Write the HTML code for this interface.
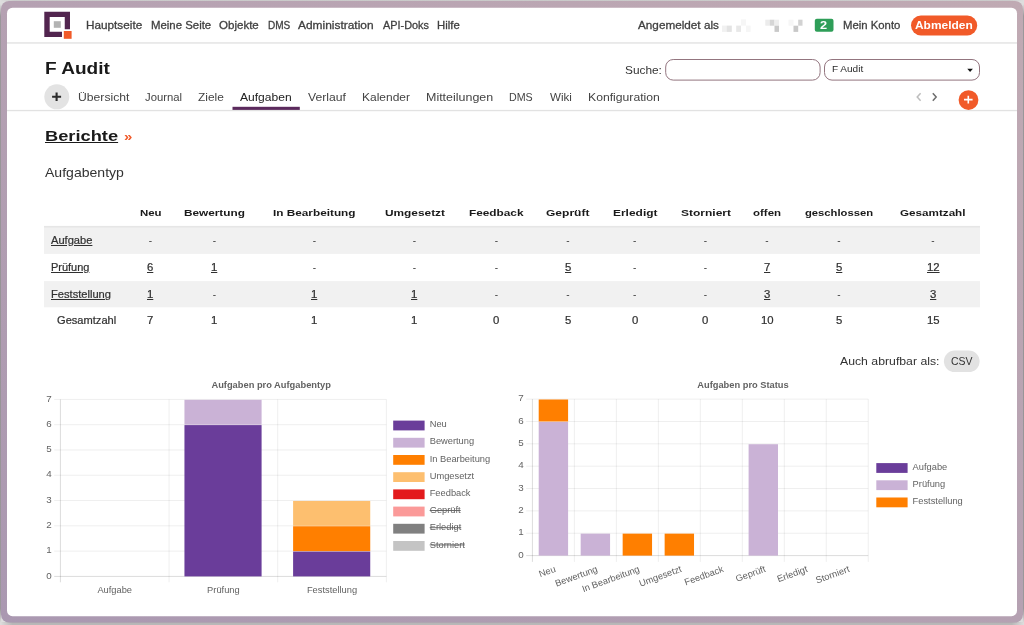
<!DOCTYPE html>
<html lang="de">
<head>
<meta charset="utf-8">
<title>F Audit - Berichte</title>
<style>
html,body{margin:0;padding:0;}
body{width:1024px;height:625px;overflow:hidden;background:#dedede;font-family:"Liberation Sans",sans-serif;position:relative;}
.abs{position:absolute;}
.t{position:absolute;white-space:nowrap;line-height:20px;transform-origin:0 0;font-family:"Liberation Sans",sans-serif;}
</style>
</head>
<body>
<svg class="abs" style="left:0;top:0;will-change:transform" width="1024" height="625" viewBox="0 0 1024 625" font-family="Liberation Sans, sans-serif">
<defs>
  <linearGradient id="gtop" x1="0" x2="1" y1="0" y2="0"><stop offset="0" stop-color="#dedede"/><stop offset="0.014" stop-color="#cbcbcb"/><stop offset="0.5" stop-color="#c9cac9"/><stop offset="0.986" stop-color="#cbcbcb"/><stop offset="1" stop-color="#dedede"/></linearGradient>
  <linearGradient id="gside" x1="0" x2="0" y1="0" y2="1"><stop offset="0" stop-color="#dedede"/><stop offset="0.0064" stop-color="#dedede"/><stop offset="0.0256" stop-color="#9a989a"/><stop offset="0.5" stop-color="#969496"/><stop offset="0.974" stop-color="#9a989a"/><stop offset="0.995" stop-color="#d8d8d8"/><stop offset="1" stop-color="#dedede"/></linearGradient>
  <linearGradient id="gbot" x1="0" x2="1" y1="0" y2="0"><stop offset="0" stop-color="#dedede"/><stop offset="0.012" stop-color="#9b9a9b"/><stop offset="0.988" stop-color="#9b9a9b"/><stop offset="1" stop-color="#dedede"/></linearGradient>
  <linearGradient id="gbot2" x1="0" x2="1" y1="0" y2="0"><stop offset="0" stop-color="#dedede"/><stop offset="0.012" stop-color="#b8b8b8"/><stop offset="0.988" stop-color="#b8b8b8"/><stop offset="1" stop-color="#dedede"/></linearGradient>
  <linearGradient id="gframe" x1="0" y1="1" x2="1" y2="0"><stop offset="0" stop-color="#aa98b1"/><stop offset="1" stop-color="#c0aab3"/></linearGradient>
</defs>
<!-- window shadow strips -->
<rect x="0" y="0" width="1024" height="1.2" fill="url(#gtop)"/>
<rect x="0" y="0" width="1.1" height="625" fill="url(#gside)"/>
<rect x="1022.9" y="0" width="1.1" height="625" fill="url(#gside)"/>
<rect x="0" y="622.3" width="1024" height="1.3" fill="url(#gbot)"/>
<rect x="0" y="623.6" width="1024" height="1.4" fill="url(#gbot2)"/>
<!-- frame -->
<rect x="1" y="1" width="1022" height="621.6" rx="8" ry="8" fill="url(#gframe)"/>
<rect x="7" y="7.7" width="1010" height="608.5" rx="5.5" ry="5.5" fill="#fff"/>

<!-- logo -->
<path d="M44.3 11.8 H70 V29.3 H64.75 V17.1 H49.7 V31.8 H62 V37 H44.3 Z" fill="#52254f"/>
<rect x="53.8" y="21.2" width="7" height="6.6" fill="#b3b3b3"/>
<rect x="63.8" y="31" width="7.8" height="7.8" fill="#f15a29"/>

<!-- header line -->
<rect x="7" y="42.2" width="1010" height="1.5" fill="#e4e4e4"/>

<!-- blurred user name -->
<rect x="722" y="25.6" width="4.6" height="6.3" fill="#f1f1f1"/>
<rect x="726.6" y="25.6" width="5.2" height="6.3" fill="#e3e3e3"/>
<rect x="736.2" y="25.6" width="4.8" height="6.3" fill="#e8e8e8"/>
<rect x="741" y="19.4" width="5" height="6.2" fill="#f6f6f6"/>
<rect x="746" y="25.6" width="4.6" height="6.3" fill="#f6f6f6"/>
<rect x="765.3" y="19.7" width="4.4" height="6" fill="#ececec"/>
<rect x="769.7" y="19.7" width="4.8" height="6" fill="#d6d6d6"/>
<rect x="774.5" y="19.7" width="4.5" height="6" fill="#eeeeee"/>
<rect x="774.5" y="25.7" width="4.5" height="6.2" fill="#c9c9c9"/>
<rect x="788.5" y="19.7" width="5" height="6" fill="#f6f6f6"/>
<rect x="798.2" y="19.7" width="4.3" height="6" fill="#d2d2d2"/>
<rect x="793.5" y="25.7" width="4.7" height="6.2" fill="#c8c8c8"/>

<!-- badge -->
<rect x="814.8" y="18.8" width="18.7" height="12.9" rx="2" fill="#2e9e58"/>
<!-- logout pill -->
<rect x="911" y="15.6" width="66.2" height="19.8" rx="9.9" fill="#f15a29"/>

<!-- search input + select -->
<rect x="665.7" y="59.5" width="154.4" height="20.6" rx="7.5" fill="#fff" stroke="#93757f" stroke-width="1"/>
<rect x="824.5" y="59.5" width="155" height="20.6" rx="7.5" fill="#fff" stroke="#93757f" stroke-width="1"/>
<path d="M967.3 68.8 H972.9 L970.1 72 Z" fill="#111"/>

<!-- tab plus circle -->
<circle cx="56.8" cy="96.8" r="12.5" fill="#e3e3e3"/>
<path d="M52.1 96.8 H61.1 M56.6 92.4 V101.1" stroke="#2b2b2b" stroke-width="2.1" fill="none"/>

<!-- tab line + active underline -->
<rect x="7" y="109.9" width="1010" height="1.3" fill="#e2e2e2"/>
<rect x="232.5" y="106.8" width="67.3" height="3.1" fill="#5b2a5d"/>

<!-- tab scroll arrows -->
<path d="M920.6 93.2 L917.2 97 L920.6 100.8" stroke="#bdbdbd" stroke-width="1.5" fill="none"/>
<path d="M932.8 93.2 L936.2 97 L932.8 100.8" stroke="#6e6e6e" stroke-width="1.5" fill="none"/>
<!-- orange plus -->
<circle cx="968.5" cy="100.1" r="9.9" fill="#f15a29"/>
<path d="M964 99.6 H972.6 M968.3 95.7 V103.4" stroke="#fff" stroke-width="1.6" fill="none"/>

<!-- table rows -->
<rect x="44" y="225.9" width="936" height="2" fill="#e6e6e6"/>
<rect x="44" y="227.6" width="936" height="26.3" fill="#f1f1f1"/>
<rect x="44" y="281.1" width="936" height="26.2" fill="#f1f1f1"/>

<!-- CSV pill -->
<rect x="943.9" y="350.5" width="35.7" height="21.6" rx="10.8" fill="#e2e2e2"/>

<g>
<path d="M54.2 576.40 H386.35" stroke="rgba(0,0,0,0.16)" stroke-width="0.9"/>
<path d="M54.2 551.11 H386.35" stroke="rgba(0,0,0,0.078)" stroke-width="0.9"/>
<path d="M54.2 525.83 H386.35" stroke="rgba(0,0,0,0.078)" stroke-width="0.9"/>
<path d="M54.2 500.54 H386.35" stroke="rgba(0,0,0,0.078)" stroke-width="0.9"/>
<path d="M54.2 475.26 H386.35" stroke="rgba(0,0,0,0.078)" stroke-width="0.9"/>
<path d="M54.2 449.97 H386.35" stroke="rgba(0,0,0,0.078)" stroke-width="0.9"/>
<path d="M54.2 424.69 H386.35" stroke="rgba(0,0,0,0.078)" stroke-width="0.9"/>
<path d="M54.2 399.40 H386.35" stroke="rgba(0,0,0,0.078)" stroke-width="0.9"/>
<path d="M60.40 399.40 V582.3" stroke="rgba(0,0,0,0.16)" stroke-width="0.9"/>
<path d="M169.05 399.40 V582.3" stroke="rgba(0,0,0,0.078)" stroke-width="0.9"/>
<path d="M277.70 399.40 V582.3" stroke="rgba(0,0,0,0.078)" stroke-width="0.9"/>
<path d="M386.35 399.40 V582.3" stroke="rgba(0,0,0,0.078)" stroke-width="0.9"/>
<rect x="184.45" y="425.09" width="77.14" height="151.31" fill="#6a3d9a"/>
<rect x="184.45" y="399.80" width="77.14" height="24.89" fill="#cab2d6"/>
<rect x="293.10" y="551.51" width="77.14" height="24.89" fill="#6a3d9a"/>
<rect x="293.10" y="526.23" width="77.14" height="24.89" fill="#ff7f00"/>
<rect x="293.10" y="500.94" width="77.14" height="24.89" fill="#fdbf6f"/>
<text x="51.6" y="578.50" text-anchor="end" font-size="9.8" fill="#626262">0</text>
<text x="51.6" y="553.21" text-anchor="end" font-size="9.8" fill="#626262">1</text>
<text x="51.6" y="527.93" text-anchor="end" font-size="9.8" fill="#626262">2</text>
<text x="51.6" y="502.64" text-anchor="end" font-size="9.8" fill="#626262">3</text>
<text x="51.6" y="477.36" text-anchor="end" font-size="9.8" fill="#626262">4</text>
<text x="51.6" y="452.07" text-anchor="end" font-size="9.8" fill="#626262">5</text>
<text x="51.6" y="426.79" text-anchor="end" font-size="9.8" fill="#626262">6</text>
<text x="51.6" y="401.50" text-anchor="end" font-size="9.8" fill="#626262">7</text>
<text x="114.72" y="593" text-anchor="middle" font-size="9.3" fill="#626262">Aufgabe</text>
<text x="223.38" y="593" text-anchor="middle" font-size="9.3" fill="#626262">Prüfung</text>
<text x="332.02" y="593" text-anchor="middle" font-size="9.3" fill="#626262">Feststellung</text>
<text x="271.2" y="388" text-anchor="middle" font-size="9.3" font-weight="700" fill="#626262">Aufgaben pro Aufgabentyp</text>
<rect x="393.2" y="420.60" width="31.4" height="9.8" fill="#6a3d9a"/>
<text x="429.7" y="427.20" font-size="9.3" fill="#626262">Neu</text>
<rect x="393.2" y="437.80" width="31.4" height="9.8" fill="#cab2d6"/>
<text x="429.7" y="444.40" font-size="9.3" fill="#626262">Bewertung</text>
<rect x="393.2" y="455.00" width="31.4" height="9.8" fill="#ff7f00"/>
<text x="429.7" y="461.60" font-size="9.3" fill="#626262">In Bearbeitung</text>
<rect x="393.2" y="472.20" width="31.4" height="9.8" fill="#fdbf6f"/>
<text x="429.7" y="478.80" font-size="9.3" fill="#626262">Umgesetzt</text>
<rect x="393.2" y="489.40" width="31.4" height="9.8" fill="#e31a1c"/>
<text x="429.7" y="496.00" font-size="9.3" fill="#626262">Feedback</text>
<rect x="393.2" y="506.60" width="31.4" height="9.8" fill="#fb9a99"/>
<text x="429.7" y="513.20" font-size="9.3" fill="#626262" text-decoration="line-through">Geprüft</text>
<rect x="393.2" y="523.80" width="31.4" height="9.8" fill="#808080"/>
<text x="429.7" y="530.40" font-size="9.3" fill="#626262" text-decoration="line-through">Erledigt</text>
<rect x="393.2" y="541.00" width="31.4" height="9.8" fill="#c4c4c4"/>
<text x="429.7" y="547.60" font-size="9.3" fill="#626262" text-decoration="line-through">Storniert</text>
<path d="M526.2 555.60 H868.24" stroke="rgba(0,0,0,0.16)" stroke-width="0.9"/>
<path d="M526.2 533.24 H868.24" stroke="rgba(0,0,0,0.078)" stroke-width="0.9"/>
<path d="M526.2 510.89 H868.24" stroke="rgba(0,0,0,0.078)" stroke-width="0.9"/>
<path d="M526.2 488.53 H868.24" stroke="rgba(0,0,0,0.078)" stroke-width="0.9"/>
<path d="M526.2 466.17 H868.24" stroke="rgba(0,0,0,0.078)" stroke-width="0.9"/>
<path d="M526.2 443.81 H868.24" stroke="rgba(0,0,0,0.078)" stroke-width="0.9"/>
<path d="M526.2 421.46 H868.24" stroke="rgba(0,0,0,0.078)" stroke-width="0.9"/>
<path d="M526.2 399.10 H868.24" stroke="rgba(0,0,0,0.078)" stroke-width="0.9"/>
<path d="M532.40 399.10 V561.9" stroke="rgba(0,0,0,0.16)" stroke-width="0.9"/>
<path d="M574.38 399.10 V561.9" stroke="rgba(0,0,0,0.078)" stroke-width="0.9"/>
<path d="M616.36 399.10 V561.9" stroke="rgba(0,0,0,0.078)" stroke-width="0.9"/>
<path d="M658.34 399.10 V561.9" stroke="rgba(0,0,0,0.078)" stroke-width="0.9"/>
<path d="M700.32 399.10 V561.9" stroke="rgba(0,0,0,0.078)" stroke-width="0.9"/>
<path d="M742.30 399.10 V561.9" stroke="rgba(0,0,0,0.078)" stroke-width="0.9"/>
<path d="M784.28 399.10 V561.9" stroke="rgba(0,0,0,0.078)" stroke-width="0.9"/>
<path d="M826.26 399.10 V561.9" stroke="rgba(0,0,0,0.078)" stroke-width="0.9"/>
<path d="M868.24 399.10 V561.9" stroke="rgba(0,0,0,0.078)" stroke-width="0.9"/>
<rect x="538.70" y="421.86" width="29.39" height="133.74" fill="#cab2d6"/>
<rect x="538.70" y="399.50" width="29.39" height="21.96" fill="#ff7f00"/>
<rect x="580.68" y="533.64" width="29.39" height="21.96" fill="#cab2d6"/>
<rect x="622.66" y="533.64" width="29.39" height="21.96" fill="#ff7f00"/>
<rect x="664.64" y="533.64" width="29.39" height="21.96" fill="#ff7f00"/>
<rect x="748.60" y="444.21" width="29.39" height="111.39" fill="#cab2d6"/>
<text x="523.6" y="557.70" text-anchor="end" font-size="9.8" fill="#626262">0</text>
<text x="523.6" y="535.34" text-anchor="end" font-size="9.8" fill="#626262">1</text>
<text x="523.6" y="512.99" text-anchor="end" font-size="9.8" fill="#626262">2</text>
<text x="523.6" y="490.63" text-anchor="end" font-size="9.8" fill="#626262">3</text>
<text x="523.6" y="468.27" text-anchor="end" font-size="9.8" fill="#626262">4</text>
<text x="523.6" y="445.91" text-anchor="end" font-size="9.8" fill="#626262">5</text>
<text x="523.6" y="423.56" text-anchor="end" font-size="9.8" fill="#626262">6</text>
<text x="523.6" y="401.20" text-anchor="end" font-size="9.8" fill="#626262">7</text>
<text transform="translate(553.39 563.6) rotate(-20)" x="0" y="8.4" text-anchor="end" font-size="9.3" fill="#626262">Neu</text>
<text transform="translate(595.37 563.6) rotate(-20)" x="0" y="8.4" text-anchor="end" font-size="9.3" fill="#626262">Bewertung</text>
<text transform="translate(637.35 563.6) rotate(-20)" x="0" y="8.4" text-anchor="end" font-size="9.3" fill="#626262">In Bearbeitung</text>
<text transform="translate(679.33 563.6) rotate(-20)" x="0" y="8.4" text-anchor="end" font-size="9.3" fill="#626262">Umgesetzt</text>
<text transform="translate(721.31 563.6) rotate(-20)" x="0" y="8.4" text-anchor="end" font-size="9.3" fill="#626262">Feedback</text>
<text transform="translate(763.29 563.6) rotate(-20)" x="0" y="8.4" text-anchor="end" font-size="9.3" fill="#626262">Geprüft</text>
<text transform="translate(805.27 563.6) rotate(-20)" x="0" y="8.4" text-anchor="end" font-size="9.3" fill="#626262">Erledigt</text>
<text transform="translate(847.25 563.6) rotate(-20)" x="0" y="8.4" text-anchor="end" font-size="9.3" fill="#626262">Storniert</text>
<text x="743" y="388" text-anchor="middle" font-size="9.3" font-weight="700" fill="#626262">Aufgaben pro Status</text>
<rect x="876.3" y="463.10" width="31.3" height="9.8" fill="#6a3d9a"/>
<text x="912.6" y="469.70" font-size="9.3" fill="#626262">Aufgabe</text>
<rect x="876.3" y="480.30" width="31.3" height="9.8" fill="#cab2d6"/>
<text x="912.6" y="486.90" font-size="9.3" fill="#626262">Prüfung</text>
<rect x="876.3" y="497.50" width="31.3" height="9.8" fill="#ff7f00"/>
<text x="912.6" y="504.10" font-size="9.3" fill="#626262">Feststellung</text>
</g>
</svg>

<div id="txt" style="position:absolute;left:0;top:0;width:1024px;height:625px;will-change:transform;">
<span class="t" style="left:85.9px;top:15.25px;font-size:10.7px;font-weight:400;color:#404040;transform:scaleX(1.0996);-webkit-text-stroke:0.28px #404040;">Hauptseite</span>
<span class="t" style="left:150.7px;top:15.25px;font-size:10.7px;font-weight:400;color:#404040;transform:scaleX(1.0664);-webkit-text-stroke:0.28px #404040;">Meine Seite</span>
<span class="t" style="left:219.3px;top:15.25px;font-size:10.7px;font-weight:400;color:#404040;transform:scaleX(1.0802);-webkit-text-stroke:0.28px #404040;">Objekte</span>
<span class="t" style="left:267.8px;top:15.25px;font-size:10.7px;font-weight:400;color:#404040;transform:scaleX(0.9389);-webkit-text-stroke:0.28px #404040;">DMS</span>
<span class="t" style="left:298.4px;top:15.25px;font-size:10.7px;font-weight:400;color:#404040;transform:scaleX(1.1164);-webkit-text-stroke:0.28px #404040;">Administration</span>
<span class="t" style="left:382.6px;top:15.25px;font-size:10.7px;font-weight:400;color:#404040;transform:scaleX(1.0190);-webkit-text-stroke:0.28px #404040;">API-Doks</span>
<span class="t" style="left:436.8px;top:15.25px;font-size:10.7px;font-weight:400;color:#404040;transform:scaleX(1.0612);-webkit-text-stroke:0.28px #404040;">Hilfe</span>
<span class="t" style="left:637.8px;top:15.25px;font-size:10.7px;font-weight:400;color:#404040;transform:scaleX(1.0981);-webkit-text-stroke:0.28px #404040;">Angemeldet als</span>
<span class="t" style="left:843.2px;top:15.25px;font-size:10.7px;font-weight:400;color:#404040;transform:scaleX(1.0614);-webkit-text-stroke:0.28px #404040;">Mein Konto</span>
<span class="t" style="left:820.3px;top:15.25px;font-size:10.8px;font-weight:700;color:#fff;transform:scaleX(1.1803);">2</span>
<span class="t" style="left:915.4px;top:15.25px;font-size:10.6px;font-weight:700;color:#fff;transform:scaleX(1.1265);">Abmelden</span>
<span class="t" style="left:45.3px;top:58.25px;font-size:17.2px;font-weight:700;color:#1a1a1a;transform:scaleX(1.1085);">F Audit</span>
<span class="t" style="left:624.5px;top:60.25px;font-size:11.3px;font-weight:400;color:#333;transform:scaleX(1.0491);">Suche:</span>
<span class="t" style="left:832.3px;top:58.75px;font-size:9.8px;font-weight:400;color:#2a2a2a;transform:scaleX(1.0230);">F Audit</span>
<span class="t" style="left:77.5px;top:87.25px;font-size:11.1px;font-weight:400;color:#444;transform:scaleX(1.0969);">Übersicht</span>
<span class="t" style="left:144.5px;top:87.25px;font-size:11.1px;font-weight:400;color:#444;transform:scaleX(1.0195);">Journal</span>
<span class="t" style="left:198.2px;top:87.25px;font-size:11.1px;font-weight:400;color:#444;transform:scaleX(1.0729);">Ziele</span>
<span class="t" style="left:240.2px;top:87.25px;font-size:11.1px;font-weight:400;color:#222;transform:scaleX(1.0881);">Aufgaben</span>
<span class="t" style="left:308.2px;top:87.25px;font-size:11.1px;font-weight:400;color:#444;transform:scaleX(1.1000);">Verlauf</span>
<span class="t" style="left:361.7px;top:87.25px;font-size:11.1px;font-weight:400;color:#444;transform:scaleX(1.0805);">Kalender</span>
<span class="t" style="left:425.8px;top:87.25px;font-size:11.1px;font-weight:400;color:#444;transform:scaleX(1.1232);">Mitteilungen</span>
<span class="t" style="left:509.4px;top:87.25px;font-size:11.1px;font-weight:400;color:#444;transform:scaleX(0.9612);">DMS</span>
<span class="t" style="left:549.7px;top:87.25px;font-size:11.1px;font-weight:400;color:#444;transform:scaleX(1.0452);">Wiki</span>
<span class="t" style="left:588.0px;top:87.25px;font-size:11.1px;font-weight:400;color:#444;transform:scaleX(1.0995);">Konfiguration</span>
<span class="t" style="left:44.6px;top:126.25px;font-size:14.7px;font-weight:700;color:#1a1a1a;transform:scaleX(1.2436);text-decoration:underline;text-decoration-thickness:1.1px;text-underline-offset:0.7px;">Berichte</span>
<span class="t" style="left:124.4px;top:126.75px;font-size:13px;font-weight:700;color:#f15a29;transform:scaleX(1.15);">»</span>
<span class="t" style="left:44.6px;top:163.25px;font-size:12.4px;font-weight:400;color:#333;transform:scaleX(1.1337);">Aufgabentyp</span>
<span class="t" style="left:139.7px;top:202.75px;font-size:9.9px;font-weight:700;color:#1a1a1a;transform:scaleX(1.1578);">Neu</span>
<span class="t" style="left:184.1px;top:202.75px;font-size:9.9px;font-weight:700;color:#1a1a1a;transform:scaleX(1.1934);">Bewertung</span>
<span class="t" style="left:273.2px;top:202.75px;font-size:9.9px;font-weight:700;color:#1a1a1a;transform:scaleX(1.1932);">In Bearbeitung</span>
<span class="t" style="left:384.5px;top:202.75px;font-size:9.9px;font-weight:700;color:#1a1a1a;transform:scaleX(1.2015);">Umgesetzt</span>
<span class="t" style="left:469.2px;top:202.75px;font-size:9.9px;font-weight:700;color:#1a1a1a;transform:scaleX(1.1962);">Feedback</span>
<span class="t" style="left:546.2px;top:202.75px;font-size:9.9px;font-weight:700;color:#1a1a1a;transform:scaleX(1.2194);">Geprüft</span>
<span class="t" style="left:612.5px;top:202.75px;font-size:9.9px;font-weight:700;color:#1a1a1a;transform:scaleX(1.2104);">Erledigt</span>
<span class="t" style="left:680.5px;top:202.75px;font-size:9.9px;font-weight:700;color:#1a1a1a;transform:scaleX(1.2149);">Storniert</span>
<span class="t" style="left:753.0px;top:202.75px;font-size:9.9px;font-weight:700;color:#1a1a1a;transform:scaleX(1.1599);">offen</span>
<span class="t" style="left:805.0px;top:202.75px;font-size:9.9px;font-weight:700;color:#1a1a1a;transform:scaleX(1.1366);">geschlossen</span>
<span class="t" style="left:900.2px;top:202.75px;font-size:9.9px;font-weight:700;color:#1a1a1a;transform:scaleX(1.1815);">Gesamtzahl</span>
<span class="t" style="left:50.8px;top:230.75px;font-size:10.0px;font-weight:400;color:#303030;transform:scaleX(1.1109);text-decoration:underline;text-decoration-thickness:0.9px;text-underline-offset:0.6px;-webkit-text-stroke:0.2px #303030;">Aufgabe</span>
<span class="t" style="left:148.8px;top:230.75px;font-size:10.0px;font-weight:400;color:#444;">-</span>
<span class="t" style="left:212.8px;top:230.75px;font-size:10.0px;font-weight:400;color:#444;">-</span>
<span class="t" style="left:312.8px;top:230.75px;font-size:10.0px;font-weight:400;color:#444;">-</span>
<span class="t" style="left:412.8px;top:230.75px;font-size:10.0px;font-weight:400;color:#444;">-</span>
<span class="t" style="left:494.8px;top:230.75px;font-size:10.0px;font-weight:400;color:#444;">-</span>
<span class="t" style="left:566.3px;top:230.75px;font-size:10.0px;font-weight:400;color:#444;">-</span>
<span class="t" style="left:633.0px;top:230.75px;font-size:10.0px;font-weight:400;color:#444;">-</span>
<span class="t" style="left:703.8px;top:230.75px;font-size:10.0px;font-weight:400;color:#444;">-</span>
<span class="t" style="left:765.3px;top:230.75px;font-size:10.0px;font-weight:400;color:#444;">-</span>
<span class="t" style="left:837.3px;top:230.75px;font-size:10.0px;font-weight:400;color:#444;">-</span>
<span class="t" style="left:931.3px;top:230.75px;font-size:10.0px;font-weight:400;color:#444;">-</span>
<span class="t" style="left:50.8px;top:257.75px;font-size:10.0px;font-weight:400;color:#303030;transform:scaleX(1.0962);text-decoration:underline;text-decoration-thickness:0.9px;text-underline-offset:0.6px;-webkit-text-stroke:0.2px #303030;">Prüfung</span>
<span class="t" style="left:147.3px;top:257.75px;font-size:10.0px;font-weight:400;color:#303030;transform:scaleX(1.1326);-webkit-text-stroke:0.2px #303030;text-decoration:underline;text-decoration-thickness:0.9px;text-underline-offset:0.6px;">6</span>
<span class="t" style="left:211.3px;top:257.75px;font-size:10.0px;font-weight:400;color:#303030;transform:scaleX(1.1326);-webkit-text-stroke:0.2px #303030;text-decoration:underline;text-decoration-thickness:0.9px;text-underline-offset:0.6px;">1</span>
<span class="t" style="left:312.8px;top:257.75px;font-size:10.0px;font-weight:400;color:#444;">-</span>
<span class="t" style="left:412.8px;top:257.75px;font-size:10.0px;font-weight:400;color:#444;">-</span>
<span class="t" style="left:494.8px;top:257.75px;font-size:10.0px;font-weight:400;color:#444;">-</span>
<span class="t" style="left:564.9px;top:257.75px;font-size:10.0px;font-weight:400;color:#303030;transform:scaleX(1.1326);-webkit-text-stroke:0.2px #303030;text-decoration:underline;text-decoration-thickness:0.9px;text-underline-offset:0.6px;">5</span>
<span class="t" style="left:633.0px;top:257.75px;font-size:10.0px;font-weight:400;color:#444;">-</span>
<span class="t" style="left:703.8px;top:257.75px;font-size:10.0px;font-weight:400;color:#444;">-</span>
<span class="t" style="left:763.9px;top:257.75px;font-size:10.0px;font-weight:400;color:#303030;transform:scaleX(1.1326);-webkit-text-stroke:0.2px #303030;text-decoration:underline;text-decoration-thickness:0.9px;text-underline-offset:0.6px;">7</span>
<span class="t" style="left:835.9px;top:257.75px;font-size:10.0px;font-weight:400;color:#303030;transform:scaleX(1.1326);-webkit-text-stroke:0.2px #303030;text-decoration:underline;text-decoration-thickness:0.9px;text-underline-offset:0.6px;">5</span>
<span class="t" style="left:926.7px;top:257.75px;font-size:10.0px;font-weight:400;color:#303030;transform:scaleX(1.1326);-webkit-text-stroke:0.2px #303030;text-decoration:underline;text-decoration-thickness:0.9px;text-underline-offset:0.6px;">12</span>
<span class="t" style="left:50.8px;top:284.75px;font-size:10.0px;font-weight:400;color:#303030;transform:scaleX(1.1127);text-decoration:underline;text-decoration-thickness:0.9px;text-underline-offset:0.6px;-webkit-text-stroke:0.2px #303030;">Feststellung</span>
<span class="t" style="left:147.3px;top:284.75px;font-size:10.0px;font-weight:400;color:#303030;transform:scaleX(1.1326);-webkit-text-stroke:0.2px #303030;text-decoration:underline;text-decoration-thickness:0.9px;text-underline-offset:0.6px;">1</span>
<span class="t" style="left:212.8px;top:284.75px;font-size:10.0px;font-weight:400;color:#444;">-</span>
<span class="t" style="left:311.4px;top:284.75px;font-size:10.0px;font-weight:400;color:#303030;transform:scaleX(1.1326);-webkit-text-stroke:0.2px #303030;text-decoration:underline;text-decoration-thickness:0.9px;text-underline-offset:0.6px;">1</span>
<span class="t" style="left:411.4px;top:284.75px;font-size:10.0px;font-weight:400;color:#303030;transform:scaleX(1.1326);-webkit-text-stroke:0.2px #303030;text-decoration:underline;text-decoration-thickness:0.9px;text-underline-offset:0.6px;">1</span>
<span class="t" style="left:494.8px;top:284.75px;font-size:10.0px;font-weight:400;color:#444;">-</span>
<span class="t" style="left:566.3px;top:284.75px;font-size:10.0px;font-weight:400;color:#444;">-</span>
<span class="t" style="left:633.0px;top:284.75px;font-size:10.0px;font-weight:400;color:#444;">-</span>
<span class="t" style="left:703.8px;top:284.75px;font-size:10.0px;font-weight:400;color:#444;">-</span>
<span class="t" style="left:763.9px;top:284.75px;font-size:10.0px;font-weight:400;color:#303030;transform:scaleX(1.1326);-webkit-text-stroke:0.2px #303030;text-decoration:underline;text-decoration-thickness:0.9px;text-underline-offset:0.6px;">3</span>
<span class="t" style="left:837.3px;top:284.75px;font-size:10.0px;font-weight:400;color:#444;">-</span>
<span class="t" style="left:929.9px;top:284.75px;font-size:10.0px;font-weight:400;color:#303030;transform:scaleX(1.1326);-webkit-text-stroke:0.2px #303030;text-decoration:underline;text-decoration-thickness:0.9px;text-underline-offset:0.6px;">3</span>
<span class="t" style="left:57.4px;top:310.75px;font-size:10.0px;font-weight:400;color:#303030;transform:scaleX(1.1095);-webkit-text-stroke:0.2px #303030;">Gesamtzahl</span>
<span class="t" style="left:147.3px;top:310.75px;font-size:10.0px;font-weight:400;color:#303030;transform:scaleX(1.1326);-webkit-text-stroke:0.2px #303030;">7</span>
<span class="t" style="left:211.3px;top:310.75px;font-size:10.0px;font-weight:400;color:#303030;transform:scaleX(1.1326);-webkit-text-stroke:0.2px #303030;">1</span>
<span class="t" style="left:311.4px;top:310.75px;font-size:10.0px;font-weight:400;color:#303030;transform:scaleX(1.1326);-webkit-text-stroke:0.2px #303030;">1</span>
<span class="t" style="left:411.4px;top:310.75px;font-size:10.0px;font-weight:400;color:#303030;transform:scaleX(1.1326);-webkit-text-stroke:0.2px #303030;">1</span>
<span class="t" style="left:493.4px;top:310.75px;font-size:10.0px;font-weight:400;color:#303030;transform:scaleX(1.1326);-webkit-text-stroke:0.2px #303030;">0</span>
<span class="t" style="left:564.9px;top:310.75px;font-size:10.0px;font-weight:400;color:#303030;transform:scaleX(1.1326);-webkit-text-stroke:0.2px #303030;">5</span>
<span class="t" style="left:631.6px;top:310.75px;font-size:10.0px;font-weight:400;color:#303030;transform:scaleX(1.1326);-webkit-text-stroke:0.2px #303030;">0</span>
<span class="t" style="left:702.4px;top:310.75px;font-size:10.0px;font-weight:400;color:#303030;transform:scaleX(1.1326);-webkit-text-stroke:0.2px #303030;">0</span>
<span class="t" style="left:760.7px;top:310.75px;font-size:10.0px;font-weight:400;color:#303030;transform:scaleX(1.1326);-webkit-text-stroke:0.2px #303030;">10</span>
<span class="t" style="left:835.9px;top:310.75px;font-size:10.0px;font-weight:400;color:#303030;transform:scaleX(1.1326);-webkit-text-stroke:0.2px #303030;">5</span>
<span class="t" style="left:926.7px;top:310.75px;font-size:10.0px;font-weight:400;color:#303030;transform:scaleX(1.1326);-webkit-text-stroke:0.2px #303030;">15</span>
<span class="t" style="left:839.7px;top:351.25px;font-size:11.3px;font-weight:400;color:#333;transform:scaleX(1.0852);">Auch abrufbar als:</span>
<span class="t" style="left:951.0px;top:351.25px;font-size:11.3px;font-weight:400;color:#333;transform:scaleX(0.9254);">CSV</span>
</div>
</body>
</html>
